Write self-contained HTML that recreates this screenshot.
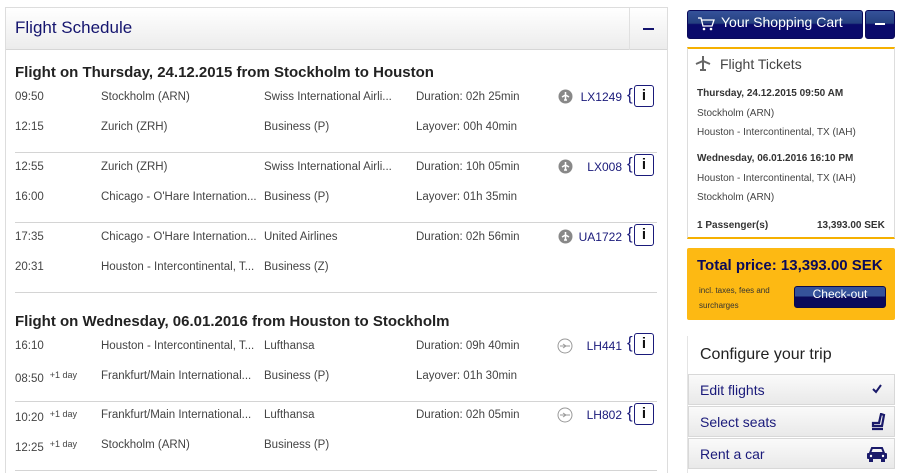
<!DOCTYPE html>
<html><head><meta charset="utf-8"><style>
*{box-sizing:border-box;margin:0;padding:0}
html,body{width:900px;height:473px;overflow:hidden}
body{background:#fff;font-family:"Liberation Sans",Arial,sans-serif;color:#333;position:relative}
.a{position:absolute;white-space:nowrap}
#main{position:absolute;left:5px;top:7px;width:663px;height:480px;border:1px solid #ddd;background:#fff}
#hdr{position:absolute;left:0;top:0;width:661px;height:42px;background:linear-gradient(#fff,#ececec);border-bottom:1px solid #d6d6d6}
.t{font-size:11.5px;color:#444;margin-top:1px}
.h2{font-size:15px;font-weight:bold;color:#222}
.div{position:absolute;left:10px;width:642px;height:1px;background:#d4d4d4}
.code{font-size:12px;color:#1a1a7a;text-align:right;width:60px}
.info{position:absolute;width:20px;height:22px;border:1px solid #1a1a7a;border-radius:3px;text-align:center;font:bold 15px/20px "Liberation Sans",sans-serif;color:#111}
.info:before{content:"{";position:absolute;left:-8px;top:-1px;font-weight:normal;color:#1a1a7a;font-size:17px}
.sup{font-size:9px;vertical-align:4px;margin-left:6px}
.cfg{position:absolute;left:688px;width:207px;height:31px;border:1px solid #d8d8d8;background:linear-gradient(#fafafa,#e9e9e9);font-size:14px;color:#1a1a7a;padding:7px 0 0 11px}
</style></head><body>
<div id="main">
<div id="hdr"><div class="a" style="left:9px;top:10px;font-size:17px;color:#14146e">Flight Schedule</div>
<div class="a" style="left:623px;top:0;width:1px;height:42px;background:#e0e0e0"></div>
<div class="a" style="left:637px;top:20px;width:11px;height:2px;background:#14146e"></div></div>
</div>

<div class="a h2" style="left:15px;top:64px">Flight on Thursday, 24.12.2015 from Stockholm to Houston</div>
<div class="a h2" style="left:15px;top:313px">Flight on Wednesday, 06.01.2016 from Houston to Stockholm</div>

<div class="a t" style="left:15px;top:90px">09:50</div><div class="a t" style="left:101px;top:90px">Stockholm (ARN)</div><div class="a t" style="left:264px;top:90px">Swiss International Airli...</div><div class="a t" style="left:416px;top:90px">Duration: 02h 25min</div>
<div class="a t" style="left:15px;top:120px">12:15</div><div class="a t" style="left:101px;top:120px">Zurich (ZRH)</div><div class="a t" style="left:264px;top:120px">Business (P)</div><div class="a t" style="left:416px;top:120px">Layover: 00h 40min</div>
<div class="div" style="top:152px;left:15px"></div>
<div class="a t" style="left:15px;top:160px">12:55</div><div class="a t" style="left:101px;top:160px">Zurich (ZRH)</div><div class="a t" style="left:264px;top:160px">Swiss International Airli...</div><div class="a t" style="left:416px;top:160px">Duration: 10h 05min</div>
<div class="a t" style="left:15px;top:190px">16:00</div><div class="a t" style="left:101px;top:190px">Chicago - O'Hare Internation...</div><div class="a t" style="left:264px;top:190px">Business (P)</div><div class="a t" style="left:416px;top:190px">Layover: 01h 35min</div>
<div class="div" style="top:222px;left:15px"></div>
<div class="a t" style="left:15px;top:230px">17:35</div><div class="a t" style="left:101px;top:230px">Chicago - O'Hare Internation...</div><div class="a t" style="left:264px;top:230px">United Airlines</div><div class="a t" style="left:416px;top:230px">Duration: 02h 56min</div>
<div class="a t" style="left:15px;top:260px">20:31</div><div class="a t" style="left:101px;top:260px">Houston - Intercontinental, T...</div><div class="a t" style="left:264px;top:260px">Business (Z)</div>
<div class="div" style="top:292px;left:15px"></div>
<div class="a t" style="left:15px;top:339px">16:10</div><div class="a t" style="left:101px;top:339px">Houston - Intercontinental, T...</div><div class="a t" style="left:264px;top:339px">Lufthansa</div><div class="a t" style="left:416px;top:339px">Duration: 09h 40min</div>
<div class="a t" style="left:15px;top:369px">08:50<span class="sup">+1 day</span></div><div class="a t" style="left:101px;top:369px">Frankfurt/Main International...</div><div class="a t" style="left:264px;top:369px">Business (P)</div><div class="a t" style="left:416px;top:369px">Layover: 01h 30min</div>
<div class="div" style="top:401px;left:15px"></div>
<div class="a t" style="left:15px;top:408px">10:20<span class="sup">+1 day</span></div><div class="a t" style="left:101px;top:408px">Frankfurt/Main International...</div><div class="a t" style="left:264px;top:408px">Lufthansa</div><div class="a t" style="left:416px;top:408px">Duration: 02h 05min</div>
<div class="a t" style="left:15px;top:438px">12:25<span class="sup">+1 day</span></div><div class="a t" style="left:101px;top:438px">Stockholm (ARN)</div><div class="a t" style="left:264px;top:438px">Business (P)</div>
<div class="div" style="top:470px;left:15px"></div>

<svg class="a" style="left:558px;top:89px" width="15" height="15"><circle cx="7.5" cy="7.5" r="7" fill="#888"/><path d="M7.5 3v8M4 8l3.5-2 3.5 2M6 11h3" stroke="#fff" stroke-width="1.5" fill="none"/></svg>
<svg class="a" style="left:558px;top:159px" width="15" height="15"><circle cx="7.5" cy="7.5" r="7" fill="#888"/><path d="M7.5 3v8M4 8l3.5-2 3.5 2M6 11h3" stroke="#fff" stroke-width="1.5" fill="none"/></svg>
<svg class="a" style="left:558px;top:229px" width="15" height="15"><circle cx="7.5" cy="7.5" r="7" fill="#888"/><path d="M7.5 3v8M4 8l3.5-2 3.5 2M6 11h3" stroke="#fff" stroke-width="1.5" fill="none"/></svg>
<svg class="a" style="left:557px;top:338px" width="16" height="16"><circle cx="8" cy="8" r="7" fill="none" stroke="#999"/><path d="M3 8h10M6 6l3 2-3 2" stroke="#999" fill="none"/></svg>
<svg class="a" style="left:557px;top:407px" width="16" height="16"><circle cx="8" cy="8" r="7" fill="none" stroke="#999"/><path d="M3 8h10M6 6l3 2-3 2" stroke="#999" fill="none"/></svg>

<div class="a code" style="left:562px;top:90px">LX1249</div><div class="info" style="left:634px;top:85px">i</div>
<div class="a code" style="left:562px;top:160px">LX008</div><div class="info" style="left:634px;top:154px">i</div>
<div class="a code" style="left:562px;top:230px">UA1722</div><div class="info" style="left:634px;top:224px">i</div>
<div class="a code" style="left:562px;top:339px">LH441</div><div class="info" style="left:634px;top:333px">i</div>
<div class="a code" style="left:562px;top:408px">LH802</div><div class="info" style="left:634px;top:403px">i</div>

<div class="a" style="left:687px;top:10px;width:176px;height:29px;border-radius:3px;background:linear-gradient(#35529a 0,#25407f 45%,#0a0a6a 50%,#0a0a6a 100%);border:1px solid #0a0a5a"></div>
<svg class="a" style="left:697px;top:16px" width="18" height="16"><path d="M1 2h3l2 8h9l2-6H5" stroke="#fff" stroke-width="1.3" fill="none"/><circle cx="7" cy="13" r="1.3" fill="#fff"/><circle cx="14" cy="13" r="1.3" fill="#fff"/></svg>
<div class="a" style="left:721px;top:14px;font-size:14px;color:#fff">Your Shopping Cart</div>
<div class="a" style="left:865px;top:10px;width:30px;height:29px;border-radius:3px;background:linear-gradient(#35529a 0,#25407f 45%,#0a0a6a 50%,#0a0a6a 100%);border:1px solid #0a0a5a"></div>
<div class="a" style="left:875px;top:23px;width:10px;height:2px;background:#fff"></div>

<div class="a" style="left:687px;top:47px;width:208px;height:192px;border:1px solid #ddd;border-top:2px solid #f5b000;border-bottom:2px solid #f5b000"></div>
<svg class="a" style="left:695px;top:55px" width="16" height="16"><path d="M8 1v14M1 9l7-3 7 3M5 15h6" stroke="#666" stroke-width="2" fill="none"/></svg>
<div class="a" style="left:720px;top:56px;font-size:14px;color:#444">Flight Tickets</div>
<div class="a" style="left:697px;top:88px;font-size:10px;font-weight:bold;color:#333">Thursday, 24.12.2015 09:50 AM</div>
<div class="a" style="left:697px;top:108px;font-size:10px;color:#444">Stockholm (ARN)</div>
<div class="a" style="left:697px;top:127px;font-size:10px;color:#444">Houston - Intercontinental, TX (IAH)</div>
<div class="a" style="left:697px;top:153px;font-size:10px;font-weight:bold;color:#333">Wednesday, 06.01.2016 16:10 PM</div>
<div class="a" style="left:697px;top:173px;font-size:10px;color:#444">Houston - Intercontinental, TX (IAH)</div>
<div class="a" style="left:697px;top:192px;font-size:10px;color:#444">Stockholm (ARN)</div>
<div class="a" style="left:697px;top:220px;font-size:10px;font-weight:bold;color:#333">1 Passenger(s)</div>
<div class="a" style="left:817px;top:220px;font-size:10px;font-weight:bold;color:#333">13,393.00 SEK</div>

<div class="a" style="left:687px;top:248px;width:208px;height:72px;background:#fdb913;border-radius:2px"></div>
<div class="a" style="left:697px;top:257px;font-size:15px;font-weight:bold;color:#0a0a5a">Total price: 13,393.00 SEK</div>
<div class="a" style="left:699px;top:283px;font-size:8px;color:#333;line-height:15px">incl. taxes, fees and<br>surcharges</div>
<div class="a" style="left:794px;top:286px;width:92px;height:22px;border-radius:3px;background:linear-gradient(#35529a 0,#35529a 45%,#0a0a5a 50%);border:1px solid #0a0a4a;color:#fff;font-size:12px;text-align:center;line-height:12px;padding-top:1px">Check-out</div>

<div class="a" style="left:687px;top:336px;width:1px;height:140px;background:#e4e4e4"></div>
<div class="a" style="left:700px;top:346px;font-size:16px;color:#222">Configure your trip</div>
<div class="cfg" style="top:374px">Edit flights</div>
<div class="cfg" style="top:406px">Select seats</div>
<div class="cfg" style="top:438px">Rent a car</div>
<svg class="a" style="left:871px;top:383px" width="12" height="12"><path d="M2 6l3 3 5-7" stroke="#1a1a6a" stroke-width="2" fill="none"/></svg>
<svg class="a" style="left:870px;top:413px" width="16" height="18"><path d="M11 1l-2 9H3v3h9l2-11zM2 16h11" stroke="#1a1a6a" stroke-width="2.2" fill="none"/></svg>
<svg class="a" style="left:866px;top:446px" width="22" height="18"><path d="M4 7l2-5h10l2 5z" fill="none" stroke="#1a1a6a" stroke-width="2"/><rect x="1" y="7" width="20" height="6" rx="1" fill="#1a1a6a"/><rect x="3" y="13" width="4" height="3" fill="#1a1a6a"/><rect x="15" y="13" width="4" height="3" fill="#1a1a6a"/><circle cx="5" cy="10" r="1.2" fill="#fff"/><circle cx="17" cy="10" r="1.2" fill="#fff"/></svg>
</body></html>
